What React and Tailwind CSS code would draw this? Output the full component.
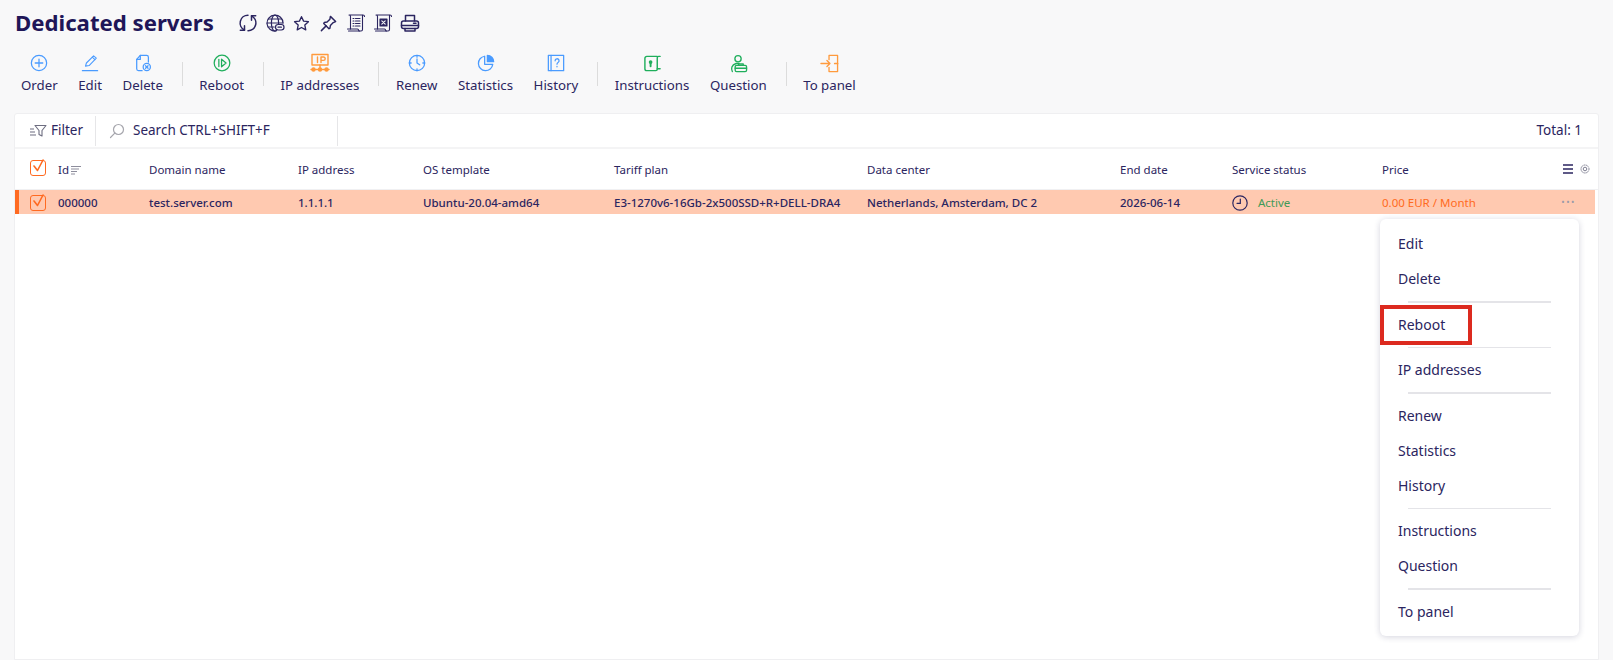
// App.jsx
// Dedicated servers list with the row action menu opened on the selected server.

const NAVY = "#2b2560";
const BLUE = "#4a9bff";
const GREEN = "#1fae5c";
const ORANGE = "#ff9a3d";

function Svg({ size = 20, color = NAVY, sw = 1.4, children }) {
  return (
    <svg width={size} height={size} viewBox="0 0 20 20" fill="none" stroke={color} strokeWidth={sw} strokeLinecap="round" strokeLinejoin="round">
      {children}
    </svg>
  );
}

// top row icons
const RefreshIcon = () => (
  <Svg sw={1.5}>
    <path d="M10 2.200A7.800 7.800 0 0 0 6.500 17" />
    <path d="M6.500 12.800V17.200H2.300" />
    <path d="M10 17.800A7.800 7.800 0 0 0 13.500 3" />
    <path d="M13.500 7.200V2.800H17.700" />
  </Svg>
);
const GlobeIcon = () => (
  <Svg sw={1.2}>
    <path d="M11 18a8 8 0 1 1 7-8" />
    <ellipse cx="10" cy="10" rx="3.600" ry="8" />
    <path d="M2 10h16M3.200 6h13.600M3.200 14h6" />
    <rect x="10.500" y="11.500" width="8.500" height="5.500" rx="2.700" fill="#f8f8f9" />
    <path d="M13 14.200h3.400" />
  </Svg>
);
const StarIcon = () => (
  <Svg size={19}>
    <path d="M10 2.800l2.200 4.700 5.100.6-3.800 3.500 1 5.100L10 14.200l-4.500 2.500 1-5.100-3.800-3.500 5.100-.6z" />
  </Svg>
);
const PinIcon = () => (
  <Svg size={19} sw={1.5}>
    <path d="M12 2.500l5.500 5.500-2.500 1-3 3-.5 3-1 .5L5 10l.5-1 3-.5 3-3z" />
    <path d="M7.500 12.500L2.500 17.500" />
  </Svg>
);
const ScrollIcon = ({ children }) => (
  <Svg sw={1.1}>
    <path d="M4.500 16V3.500C4.500 2.500 3.800 2 3 2h14c.8 0 1.500.6 1.500 1.500" />
    <path d="M16.500 2.200V16.500c0 .9-.7 1.500-1.500 1.500H2.500" />
    <path d="M1.500 16h10c.6 0 1 .5 1 1s.5 1 1 1" />
    {children}
  </Svg>
);
const PrinterIcon = () => (
  <Svg sw={1.5}>
    <path d="M5.500 8V2.500h9V8" />
    <rect x="1.500" y="8" width="17" height="7.500" rx="2" />
    <path d="M5 15.500v2.500h10v-2.500M1.500 12.500h17" />
    <path d="M13.500 10.200h2.500" />
  </Svg>
);

const topIcons = [
  <RefreshIcon key="r" />,
  <GlobeIcon key="g" />,
  <StarIcon key="s" />,
  <PinIcon key="p" />,
  <ScrollIcon key="d">
    <path d="M7 5.500h1M9.500 5.500h4.500M7 8h1M9.500 8h4.500M7 10.500h1M9.500 10.500h4.500M7 13h1M9.500 13h4.500" />
  </ScrollIcon>,
  <ScrollIcon key="x">
    <rect x="7" y="6" width="7" height="7" fill={NAVY} />
    <path d="M8.800 7.800l3.400 3.400M12.200 7.800l-3.400 3.400" stroke="#f8f8f9" />
  </ScrollIcon>,
  <PrinterIcon key="pr" />,
];

// toolbar icons
const toolbarIcons = {
  order: (
    <Svg size={18} color={BLUE}>
      <circle cx="10" cy="10" r="8.500" />
      <path d="M10 5.800v8.400M5.800 10h8.400" />
    </Svg>
  ),
  edit: (
    <Svg size={18} color={BLUE} sw={1.2}>
      <path d="M5 13.500l1-3.500 8-8 3 2.500-8 8.300z" />
      <path d="M12.500 3.500l3 2.700" />
      <path d="M1.500 18.500h17" />
    </Svg>
  ),
  del: (
    <Svg size={18} color={BLUE} sw={1.4}>
      <path d="M9 18.500H5a2 2 0 0 1-2-2V6l4-4.500h7a2 2 0 0 1 2 2V9" />
      <path d="M7 1.500V6H3" />
      <circle cx="14.200" cy="14.500" r="4" />
      <path d="M12.800 13.100l2.800 2.800M15.600 13.100l-2.800 2.800" />
    </Svg>
  ),
  reboot: (
    <Svg size={18} color={GREEN} sw={1.4}>
      <circle cx="10" cy="10" r="8.700" />
      <path d="M6.500 6v8" />
      <path d="M9.500 5.800l5 4.200-5 4.200z" />
    </Svg>
  ),
  ip: (
    <Svg size={20} color={ORANGE} sw={1.4}>
      <rect x="2" y="1.500" width="16" height="10.500" />
      <path d="M7.500 4v5.500M11 9.500V4h2.500a1.700 1.700 0 0 1 0 3.400H11" />
      <path d="M10 12v4M1 16.500h18" />
      <circle cx="3.500" cy="16.500" r="1.500" fill={ORANGE} />
      <circle cx="10" cy="16.500" r="1.500" fill={ORANGE} />
      <circle cx="16.500" cy="16.500" r="1.500" fill={ORANGE} />
    </Svg>
  ),
  renew: (
    <Svg size={18} color={BLUE} sw={1.4}>
      <circle cx="10" cy="10" r="8.500" />
      <path d="M10 1.500v2M10 16.500v2M1.500 10h2M16.500 10h2" />
      <path d="M10 5.500V10l3 2" />
    </Svg>
  ),
  stats: (
    <Svg size={18} color={BLUE} sw={1.4}>
      <path d="M8.500 2.500a8 8 0 1 0 9 9h-9z" />
      <path d="M11.500 1.500a7 7 0 0 1 7 7h-7z" fill={BLUE} />
    </Svg>
  ),
  history: (
    <Svg size={18} color={BLUE} sw={1.4}>
      <rect x="1.500" y="1.500" width="17" height="17" />
      <path d="M4.500 1.500v17" />
      <path d="M9 7.500a2.200 2.200 0 1 1 3.300 1.900c-.8.5-1.200 1-1.200 1.900M11.100 13.800v.4" />
    </Svg>
  ),
  instructions: (
    <Svg size={19} color={GREEN} sw={1.5}>
      <path d="M15 2.500H4a2 2 0 0 0-2 2V15.500a2 2 0 0 0 2 2h9.500a1.500 1.500 0 0 0 1.500-1.500V4a1.500 1.500 0 0 1 1.500-1.500H18" />
      <path d="M15 15.500h3" />
      <circle cx="8" cy="8.500" r="1.200" fill={GREEN} />
      <path d="M8 9v4" strokeWidth="2" />
    </Svg>
  ),
  question: (
    <Svg size={19} color={GREEN} sw={1.4}>
      <circle cx="9.500" cy="5" r="3.300" />
      <path d="M3.500 18.500c-1.500-3-1-7 4-8.500h3" />
      <rect x="6.500" y="12" width="12" height="6.500" rx="1.500" />
      <path d="M10 12v-1.500h5V12M6.500 15h12" />
    </Svg>
  ),
  panel: (
    <Svg size={19} color={ORANGE} sw={1.4}>
      <path d="M9.500 6V1.500h9v17h-9V14" />
      <path d="M1 10h9.500M7.300 6.800L10.500 10 7.300 13.200" />
      <path d="M15.500 10h3" strokeWidth="1.800" />
    </Svg>
  ),
};

const toolbar = [
  [
    { label: "Order", icon: "order" },
    { label: "Edit", icon: "edit" },
    { label: "Delete", icon: "del" },
  ],
  [{ label: "Reboot", icon: "reboot" }],
  [{ label: "IP addresses", icon: "ip" }],
  [
    { label: "Renew", icon: "renew" },
    { label: "Statistics", icon: "stats" },
    { label: "History", icon: "history" },
  ],
  [
    { label: "Instructions", icon: "instructions" },
    { label: "Question", icon: "question" },
  ],
  [{ label: "To panel", icon: "panel" }],
];

const menuGroups = [
  ["Edit", "Delete"],
  ["Reboot"],
  ["IP addresses"],
  ["Renew", "Statistics", "History"],
  ["Instructions", "Question"],
  ["To panel"],
];

const COLS = "grid grid-cols-[43px_91px_149px_125px_191px_253px_253px_112px_149px_1fr] items-center";

function Checkbox() {
  return (
    <span className="relative block w-[16px] h-[16px] ml-[15px] border-[1.5px] border-[#ff6a21] rounded-[3px]">
      <svg className="absolute left-[1px] -top-[3px]" width="13" height="15" viewBox="0 0 13 15" fill="none" stroke="#ff6a21" strokeWidth="1.600" strokeLinecap="round" strokeLinejoin="round">
        <path d="M2 8l3.500 4.500L11 2" />
      </svg>
    </span>
  );
}

function ActionMenu() {
  return (
    <div className="absolute left-[1365px] top-[105px] w-[199px] bg-white rounded-[6px] shadow-[0_1px_6px_rgba(40,40,90,0.2)] pt-[7px] pb-[7px] text-[14px] text-[#2b2560]">
      {menuGroups.map((group, i) => (
        <div key={group[0]}>
          {i > 0 && (
            <div className="h-[10.500px] flex items-center justify-center">
              <div className="w-[143px] h-[1.500px] bg-[#e4e4e8] mt-[1px]" />
            </div>
          )}
          {group.map((item) => (
            <div key={item} className="h-[35px] pl-[18px] flex items-center">{item}</div>
          ))}
        </div>
      ))}
      {/* red marker around Reboot */}
      <div className="absolute left-0 top-[86px] w-[92px] h-[40px] border-[4px] border-[#dc2a1f]" />
    </div>
  );
}

export default function App() {
  return (
    <div className="h-[660px] overflow-hidden bg-[#f8f8f9] font-['Noto_Sans',sans-serif] text-[#2b2560]">
      <div className="h-[46px] pl-[15px] flex items-center">
        <h1 className="text-[22.200px] font-bold text-[#1f1658] w-[219px] leading-none">Dedicated servers</h1>
        <div className="flex items-center">
          {topIcons.map((icon) => (
            <div key={icon.key} className="w-[27px] flex justify-center">{icon}</div>
          ))}
        </div>
      </div>

      <div className="h-[67px] pl-[15px] flex items-start text-[13.250px]">
        {toolbar.map((group, i) => (
          <div key={i} className="flex items-start">
            {i > 0 && <div className="w-px h-[24px] mt-[16px] ml-[13px] mr-[10.500px] bg-[#dcdcdc]" />}
            <div className="flex gap-[10.600px] px-[1px]">
              {group.map((item) => (
                <div key={item.label} className="flex flex-col items-center px-[5px] whitespace-nowrap">
                  <div className="h-[30px] pt-[4px] flex items-center justify-center">{toolbarIcons[item.icon]}</div>
                  <div className="leading-[20px] mt-[-1px]">{item.label}</div>
                </div>
              ))}
            </div>
          </div>
        ))}
      </div>

      <div className="relative mx-[14px] h-[547px] bg-white border border-[#efeff1] rounded-t-[3px]">
        <div className="h-[35px] flex items-center border-b-[2px] border-[#f4f4f5] text-[13.500px]">
          <div className="h-[30px] w-[81px] pl-[14px] flex items-center gap-[4px] border-r border-[#e6e6e8]">
            <svg width="18" height="14" viewBox="0 0 18 14" fill="none" stroke="#6d6d80" strokeWidth="1.100" strokeLinejoin="round">
              <path d="M6 1.500h11l-4 5V12l-3-1.500v-4z" />
              <path d="M1 5h4M1 8h5M1 11h6" />
            </svg>
            <span>Filter</span>
          </div>
          <div className="h-[30px] w-[242px] pl-[13px] flex items-center gap-[8px] border-r border-[#e6e6e8]">
            <svg width="16" height="16" viewBox="0 0 16 16" fill="none" stroke="#a6a6ad" strokeWidth="1.200" strokeLinecap="round">
              <circle cx="9.500" cy="6.500" r="5" />
              <path d="M5.800 10.200L1.500 14.500" />
            </svg>
            <span>Search CTRL+SHIFT+F</span>
          </div>
          <div className="ml-auto pr-[16px]">Total: 1</div>
        </div>

        <div className={`${COLS} h-[41px] pt-[2px] text-[11.500px] border-b border-[#f0f0f2]`}>
          <div className="-mt-[4px]"><Checkbox /></div>
          <div className="flex items-center gap-[1px]">
            Id
            <svg width="12" height="10" viewBox="0 0 12 10" stroke="#8d8d9c" strokeWidth="1">
              <path d="M1 1.500h10M1 4h8M1 6.500h6M1 9h4" />
            </svg>
          </div>
          <div>Domain name</div>
          <div>IP address</div>
          <div>OS template</div>
          <div>Tariff plan</div>
          <div>Data center</div>
          <div>End date</div>
          <div>Service status</div>
          <div className="flex items-center pl-[1px]">
            <span>Price</span>
            <span className="ml-auto mr-[8px] -mt-[2px] flex items-center gap-[7px]">
              <svg width="10" height="10" viewBox="0 0 10 10" stroke={NAVY} strokeWidth="1.600">
                <path d="M0 1h10M0 5h10M0 9h10" />
              </svg>
              <svg width="10" height="10" viewBox="0 0 10 10" fill="none" stroke="#7f7f92" strokeWidth="1">
                <circle cx="5" cy="5" r="1.800" />
                <circle cx="5" cy="5" r="4" strokeDasharray="1.500 0.600" />
              </svg>
            </span>
          </div>
        </div>

        <div className={`${COLS} h-[24px] w-[1580px] pt-[2px] bg-[#ffc9b0] border-l-[4px] border-[#ff6a21] text-[11.500px] font-medium`}>
          <div className="-ml-[4px] -mt-[1px]"><Checkbox /></div>
          <div className="-ml-[4px]">000000</div>
          <div className="-ml-[4px]">test.server.com</div>
          <div className="-ml-[4px]">1.1.1.1</div>
          <div className="-ml-[4px]">Ubuntu-20.04-amd64</div>
          <div className="-ml-[4px] whitespace-nowrap">E3-1270v6-16Gb-2x500SSD+R+DELL-DRA4</div>
          <div className="-ml-[4px]">Netherlands, Amsterdam, DC 2</div>
          <div className="-ml-[4px]">2026-06-14</div>
          <div className="-ml-[4px] flex items-center gap-[10px]">
            <svg width="16" height="16" viewBox="0 0 16 16" fill="none" stroke={NAVY} strokeWidth="1.200" strokeLinecap="round">
              <circle cx="8" cy="8" r="7.200" />
              <path d="M8.300 4v4.300H5" />
            </svg>
            <span className="text-[#3f9a58] font-normal">Active</span>
          </div>
          <div className="-ml-[3px] flex items-center text-[#ff6a21] font-normal">
            <span>0.00 EUR / Month</span>
            <span className="ml-auto mr-[19px] -mt-[4px] text-[#9a9aa8] tracking-[1.500px] text-[9px] leading-none">•••</span>
          </div>
        </div>

        <ActionMenu />
      </div>
    </div>
  );
}
